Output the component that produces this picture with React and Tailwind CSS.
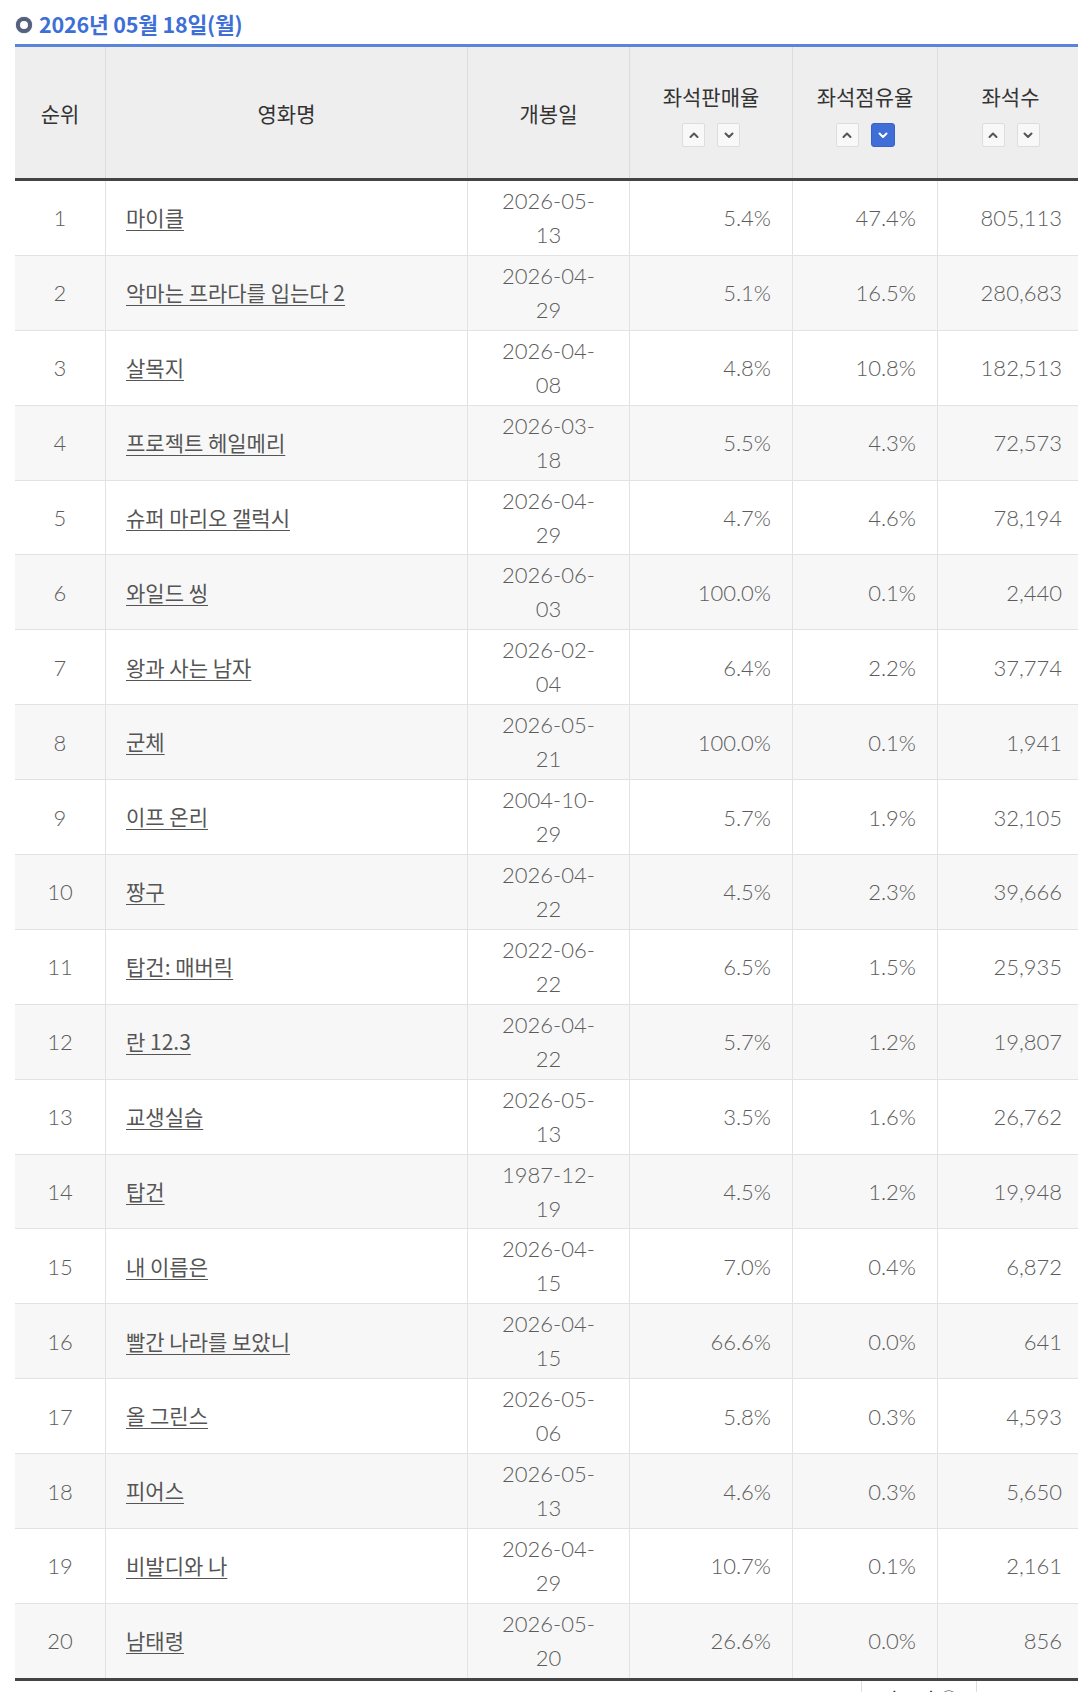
import React from "react";

const rows = [
  [1, "마이클", "2026-05-", "13", "5.4%", "47.4%", "805,113"],
  [2, "악마는 프라다를 입는다 2", "2026-04-", "29", "5.1%", "16.5%", "280,683"],
  [3, "살목지", "2026-04-", "08", "4.8%", "10.8%", "182,513"],
  [4, "프로젝트 헤일메리", "2026-03-", "18", "5.5%", "4.3%", "72,573"],
  [5, "슈퍼 마리오 갤럭시", "2026-04-", "29", "4.7%", "4.6%", "78,194"],
  [6, "와일드 씽", "2026-06-", "03", "100.0%", "0.1%", "2,440"],
  [7, "왕과 사는 남자", "2026-02-", "04", "6.4%", "2.2%", "37,774"],
  [8, "군체", "2026-05-", "21", "100.0%", "0.1%", "1,941"],
  [9, "이프 온리", "2004-10-", "29", "5.7%", "1.9%", "32,105"],
  [10, "짱구", "2026-04-", "22", "4.5%", "2.3%", "39,666"],
  [11, "탑건: 매버릭", "2022-06-", "22", "6.5%", "1.5%", "25,935"],
  [12, "란 12.3", "2026-04-", "22", "5.7%", "1.2%", "19,807"],
  [13, "교생실습", "2026-05-", "13", "3.5%", "1.6%", "26,762"],
  [14, "탑건", "1987-12-", "19", "4.5%", "1.2%", "19,948"],
  [15, "내 이름은", "2026-04-", "15", "7.0%", "0.4%", "6,872"],
  [16, "빨간 나라를 보았니", "2026-04-", "15", "66.6%", "0.0%", "641"],
  [17, "올 그린스", "2026-05-", "06", "5.8%", "0.3%", "4,593"],
  [18, "피어스", "2026-05-", "13", "4.6%", "0.3%", "5,650"],
  [19, "비발디와 나", "2026-04-", "29", "10.7%", "0.1%", "2,161"],
  [20, "남태령", "2026-05-", "20", "26.6%", "0.0%", "856"],
];

function Chevron({ up, active }) {
  return (
    <svg width="12" height="8" viewBox="0 0 12 8" fill="none">
      <polyline
        points={up ? "2.5,6 6,2.5 9.5,6" : "2.5,2.5 6,6 9.5,2.5"}
        stroke={active ? "#ffffff" : "#555555"}
        strokeWidth="2"
        strokeLinecap="round"
        strokeLinejoin="round"
      />
    </svg>
  );
}

function SortButtons({ activeDown }) {
  return (
    <div className="flex gap-[12px] justify-center">
      <div className="w-[23px] h-[24px] flex items-center justify-center border border-[#dddddd] bg-[#f8f8f8] rounded-[2px]">
        <Chevron up />
      </div>
      {activeDown ? (
        <div className="w-[24px] h-[24px] flex items-center justify-center bg-[#3f6ed8] rounded-[3px] border border-[#3863c9]">
          <Chevron active />
        </div>
      ) : (
        <div className="w-[23px] h-[24px] flex items-center justify-center border border-[#dddddd] bg-[#f8f8f8] rounded-[2px]">
          <Chevron />
        </div>
      )}
    </div>
  );
}

const cols = "grid grid-cols-[91px_362px_162px_163px_145px_145px]";
const num = "font-['Lato','Noto_Sans_CJK_KR',sans-serif] font-light text-[22px]";

export default function App() {
  return (
    <div className="w-[1078px] h-[1692px] overflow-hidden bg-white font-['Noto_Sans_CJK_KR','Noto_Sans',sans-serif]">
      <div className="h-[44px] flex items-center pt-[5px] pl-[16px] gap-[7px]">
        <div className="w-[16px] h-[16px] rounded-full border-[4px] border-[#55627f] bg-white shadow-[0_0_1px_#55627f]" />
        <div className="text-[21.5px] font-bold text-[#3d6fd6] tracking-[-0.2px]">
          2026년 05월 18일(월)
        </div>
      </div>

      <div className="ml-[15px] w-[1068px] border-t-[3px] border-[#5a84d8]">
        {/* header */}
        <div className={`${cols} h-[134px] bg-[#eeeeee] border-b-[3px] border-[#444444] text-[21px] leading-[30px] text-[#333333]`}>
          <div className="flex items-center justify-center border-r border-[#dcdcdc]">순위</div>
          <div className="flex items-center justify-center border-r border-[#dcdcdc]">영화명</div>
          <div className="flex items-center justify-center border-r border-[#dcdcdc]">개봉일</div>
          <div className="flex flex-col items-center justify-center gap-[12px] border-r border-[#dcdcdc] pt-[3px]">
            <div>좌석판매율</div>
            <SortButtons />
          </div>
          <div className="flex flex-col items-center justify-center gap-[12px] border-r border-[#dcdcdc] pt-[3px]">
            <div>좌석점유율</div>
            <SortButtons activeDown />
          </div>
          <div className="flex flex-col items-center justify-center gap-[12px] pt-[3px]">
            <div>좌석수</div>
            <SortButtons />
          </div>
        </div>

        {rows.map((r, i) => {
          const last = i === rows.length - 1;
          return (
            <div
              key={r[0]}
              className={`${cols} ${last ? "h-[76.9px] border-b-[3px] border-[#444444]" : "h-[74.9px] border-b border-[#e2e2e2]"} ${i % 2 === 1 ? "bg-[#f7f7f7]" : "bg-white"} text-[#5c5c5c]`}
            >
              <div className={`flex items-center justify-center border-r border-[#e2e2e2] ${num}`}>
                {r[0]}
              </div>
              <div className="flex items-center pl-[20px] border-r border-[#e2e2e2] text-[21px] text-[#555555]">
                <span className="underline underline-offset-[4px] decoration-[1px]">{r[1]}</span>
              </div>
              <div className={`flex flex-col items-center justify-center border-r border-[#e2e2e2] leading-[34px] ${num}`}>
                <span>{r[2]}</span>
                <span>{r[3]}</span>
              </div>
              <div className={`flex items-center justify-end pr-[21px] border-r border-[#e2e2e2] ${num}`}>
                {r[4]}
              </div>
              <div className={`flex items-center justify-end pr-[21px] border-r border-[#e2e2e2] ${num}`}>
                {r[5]}
              </div>
              <div className={`flex items-center justify-end pr-[21px] ${num}`}>
                {r[6]}
              </div>
            </div>
          );
        })}

        <div className="flex">
          <div className="ml-[846px] w-[116px] h-[30px] border-l border-r border-[#dddddd] flex justify-center pt-[5px] text-[20px] leading-[28px] text-[#333333]">
            더보기 ⓥ
          </div>
        </div>
      </div>
    </div>
  );
}
